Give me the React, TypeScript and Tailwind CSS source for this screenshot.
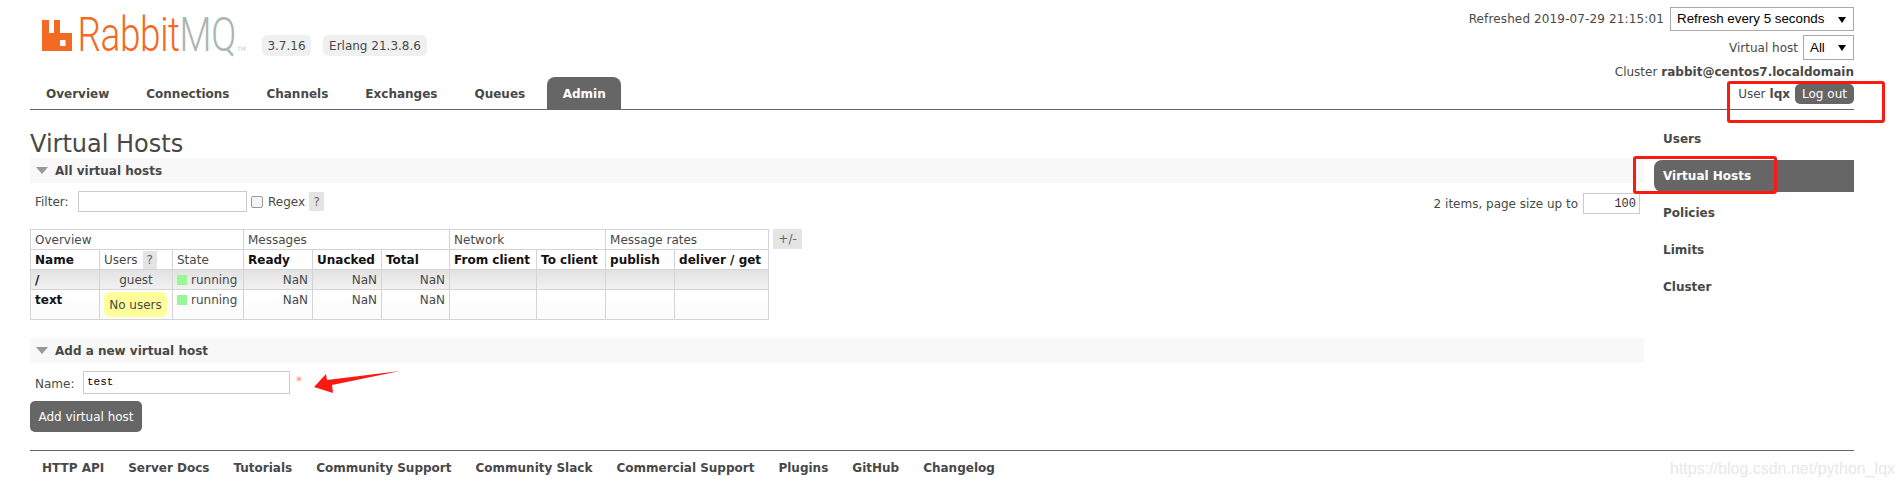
import React from "react";

const tabs = ["Overview", "Connections", "Channels", "Exchanges", "Queues"];
const footerLinks = [
  "HTTP API",
  "Server Docs",
  "Tutorials",
  "Community Support",
  "Community Slack",
  "Commercial Support",
  "Plugins",
  "GitHub",
  "Changelog",
];
const sideLinks = ["Users", "Virtual Hosts", "Policies", "Limits", "Cluster"];

const colWidths = [69, 73, 71, 69, 69, 68, 87, 69, 69, 94];

function Help({ label = "?", className = "" }: { label?: string; className?: string }) {
  return (
    <span className={`inline-flex items-center justify-center bg-[#e4e4e4] text-[#666] ${className}`}>
      {label}
    </span>
  );
}

function SectionHeader({ title }: { title: string }) {
  return (
    <div className="flex h-[25px] items-center bg-[#f8f8f8] pl-[6px] font-bold">
      <span className="mr-[7px] h-0 w-0 border-x-[6px] border-t-[7px] border-x-transparent border-t-[#999]" />
      {title}
    </div>
  );
}

function FakeSelect({ label, className }: { label: string; className: string }) {
  return (
    <div
      className={`relative flex items-center border border-[#a9a9a9] bg-white pl-[6px] font-['Liberation_Sans',Arial,sans-serif] text-[13.33px] text-black ${className}`}
    >
      {label}
      <span className="absolute right-[7px] top-[9px] h-0 w-0 border-x-[4px] border-t-[6px] border-x-transparent border-t-black" />
    </div>
  );
}

function Logo() {
  return (
    <div className="relative flex h-[34px] w-[203px] items-start">
      <svg width="30" height="34" viewBox="0 0 30 34" className="shrink-0">
        <path
          fill="#f26a24"
          fillRule="evenodd"
          d="M0 2h7v13h5V2h6v13h12v18H0z M18 22h5.5v6H18z"
        />
      </svg>
      <div className="w-0 origin-top-left scale-x-[.77] whitespace-nowrap pl-[7px] font-['Roboto',sans-serif] text-[48px] leading-[34px] font-light tracking-[-0.5px]">
        <span className="text-[#f26a24]">Rabbit</span>
        <span className="text-[#a9b6b1]">MQ</span>
      </div>
      <span className="absolute top-[28px] left-[195px] text-[6px] leading-none text-[#c4ccc9]">TM</span>
    </div>
  );
}

function VhostRow({
  name,
  users,
  tall,
}: {
  name: string;
  users: React.ReactNode;
  tall?: boolean;
}) {
  const bg = tall
    ? "bg-gradient-to-b from-[#ffffff] to-[#fbfbfb]"
    : "bg-gradient-to-b from-[#e2e2e2] to-[#f2f2f2]";
  const cell = `border border-[#d4d4d4] px-[4px] align-top ${tall ? "pt-[1px] leading-[18px]" : "pt-[2px] leading-[17px]"}`;
  return (
    <tr className={`${bg} ${tall ? "h-[30px]" : "h-[20px]"}`}>
      <td className={`${cell} font-bold text-[#111]`}>{name}</td>
      <td className={`${cell} ${tall ? "!pt-[2px]" : ""} text-center`}>{users}</td>
      <td className={`${cell} whitespace-nowrap`}>
        <span className="mr-[4px] inline-block size-[10px] bg-[#98f898] align-[-1px]" />
        running
      </td>
      <td className={`${cell} text-right`}>NaN</td>
      <td className={`${cell} text-right`}>NaN</td>
      <td className={`${cell} text-right`}>NaN</td>
      <td className={cell} />
      <td className={cell} />
      <td className={cell} />
      <td className={cell} />
    </tr>
  );
}

function VhostTable() {
  const group = "border border-[#d4d4d4] px-[4px] text-left font-normal leading-[18px]";
  const th = "border border-[#d4d4d4] px-[4px] text-left font-bold text-[#111] whitespace-nowrap leading-[18px]";
  const plain = "border border-[#d4d4d4] px-[4px] text-left font-normal leading-[18px]";
  return (
    <div className="mt-[17px] flex items-start gap-[4px]">
      <table className="w-[738px] table-fixed border-collapse border border-[#ccc]">
        <colgroup>
          {colWidths.map((w, i) => (
            <col key={i} style={{ width: w }} />
          ))}
        </colgroup>
        <thead>
          <tr className="h-[20px]">
            <th colSpan={3} className={group}>Overview</th>
            <th colSpan={3} className={group}>Messages</th>
            <th colSpan={2} className={group}>Network</th>
            <th colSpan={2} className={group}>Message rates</th>
          </tr>
          <tr className="h-[20px]">
            <th className={th}>Name</th>
            <th className={plain}>
              <div className="flex h-[18px] items-center whitespace-nowrap">
                Users
                <Help className="ml-[5px] h-[18px] w-[14px]" />
              </div>
            </th>
            <th className={plain}>State</th>
            <th className={th}>Ready</th>
            <th className={th}>Unacked</th>
            <th className={th}>Total</th>
            <th className={th}>From client</th>
            <th className={th}>To client</th>
            <th className={th}>publish</th>
            <th className={th}>deliver / get</th>
          </tr>
        </thead>
        <tbody>
          <VhostRow name="/" users="guest" />
          <VhostRow
            tall
            name="text"
            users={
              <span className="flex h-[25px] w-[63px] items-center justify-center rounded-[6px] bg-[#ffff99] whitespace-nowrap">
                No users
              </span>
            }
          />
        </tbody>
      </table>
      <Help label="+/-" className="h-[20px] w-[29px]" />
    </div>
  );
}

export default function App() {
  return (
    <div className="relative h-[485px] w-[1902px] overflow-hidden bg-white pr-[48px] pl-[30px] font-['DejaVu_Sans',Verdana,sans-serif] text-[12px] text-[#484848]">
      {/* Header */}
      <header className="flex h-[110px] justify-between border-b border-[#666]">
        <div className="flex flex-col justify-between">
          <div className="mt-[18px] ml-[12px] flex items-start">
            <Logo />
            <span className="mt-[17px] ml-[17px] flex h-[21px] w-[49px] items-center justify-center rounded-[5px] bg-[#f0f0f0]">
              3.7.16
            </span>
            <span className="mt-[17px] ml-[12px] flex h-[21px] w-[104px] items-center justify-center rounded-[5px] bg-[#f0f0f0]">
              Erlang 21.3.8.6
            </span>
          </div>
          <nav className="flex items-end pl-[4px]">
            {tabs.map((t) => (
              <span key={t} className="mr-[13px] flex h-[32px] items-center px-[12px] pt-[2px] font-bold whitespace-nowrap">
                {t}
              </span>
            ))}
            <span className="-ml-[3px] flex h-[32px] w-[74px] items-center justify-center rounded-t-[8px] bg-[#666] pt-[2px] font-bold text-white">
              Admin
            </span>
          </nav>
        </div>
        <div className="flex flex-col items-end pt-[7px]">
          <div className="flex h-[24px] items-center gap-[6px]">
            <span className="tracking-[0.13px]">Refreshed 2019-07-29 21:15:01</span>
            <FakeSelect label="Refresh every 5 seconds" className="h-[24px] w-[184px]" />
          </div>
          <div className="mt-[4px] flex h-[25px] items-center gap-[5px]">
            Virtual host
            <FakeSelect label="All" className="h-[25px] w-[51px]" />
          </div>
          <div className="mt-[2px] flex h-[20px] items-center gap-[4px]">
            Cluster <b>rabbit@centos7.localdomain</b>
          </div>
          <div className="mt-[2px] flex h-[20px] items-center">
            User <b className="ml-[4px]">lqx</b>
            <span className="ml-[5px] flex h-[20px] w-[59px] items-center justify-center rounded-[5px] bg-[#666] text-white">
              Log out
            </span>
          </div>
        </div>
      </header>

      {/* Main */}
      <div className="flex">
        <main className="w-[1614px]">
          <h1 className="flex h-[48px] items-end text-[24px] leading-[28px] font-normal">Virtual Hosts</h1>
          <SectionHeader title="All virtual hosts" />
          <div className="mt-[8px] flex h-[21px] items-center justify-between pr-[4px] pl-[5px]">
            <div className="flex items-center">
              <span className="w-[43px]">Filter:</span>
              <span className="h-[21px] w-[169px] border border-[#ccc]" />
              <span className="mr-[5px] ml-[4px] size-[12px] rounded-[2px] border border-[#999] bg-[#f4f4f4]" />
              Regex
              <Help className="ml-[4px] h-[19px] w-[15px]" />
            </div>
            <div className="mt-[4px] flex items-center gap-[5px]">
              2 items, page size up to
              <span className="flex h-[21px] w-[57px] items-center justify-end border border-[#ccc] pr-[3px] font-['Liberation_Mono',monospace] text-[#333]">
                100
              </span>
            </div>
          </div>
          <VhostTable />
          <div className="mt-[18px]">
            <SectionHeader title="Add a new virtual host" />
          </div>
          <div className="mt-[8px] flex h-[23px] items-center pl-[5px]">
            <span className="w-[48px] pt-[2px]">Name:</span>
            <span className="flex h-[23px] w-[207px] items-center border border-[#ccc] pl-[3px] font-['Liberation_Mono',monospace] text-[11px] text-black">
              test
            </span>
            <span className="mb-[4px] ml-[6px] text-[#f88]">*</span>
          </div>
          <button className="mt-[7px] block h-[31px] w-[112px] rounded-[5px] bg-[#666] text-white">
            Add virtual host
          </button>
        </main>
        <aside className="ml-[10px] flex w-[200px] flex-col pt-[13px]">
          {sideLinks.map((l) =>
            l === "Virtual Hosts" ? (
              <span key={l} className="mb-[5px] flex h-[32px] items-center rounded-l-[8px] bg-[#666] pl-[9px] font-bold text-white">
                {l}
              </span>
            ) : (
              <span key={l} className="mb-[5px] flex h-[32px] items-center pl-[9px] font-bold">
                {l}
              </span>
            ),
          )}
        </aside>
      </div>

      {/* Footer */}
      <footer className="absolute top-[450px] right-[48px] left-[30px] flex h-[35px] items-center border-t border-[#666] pl-[12px] font-bold">
        {footerLinks.map((l) => (
          <span key={l} className="mr-[24px] whitespace-nowrap">{l}</span>
        ))}
      </footer>

      {/* Screenshot annotations */}
      <div className="absolute top-[81px] left-[1727px] h-[42px] w-[158px] rounded-[3px] border-[3px] border-[#fb1a10]" />
      <div className="absolute top-[156px] left-[1633px] h-[38px] w-[144px] rounded-[3px] border-[3px] border-[#fb1a10]" />
      <svg className="absolute top-[370px] left-[312px]" width="90" height="24" viewBox="0 0 90 24">
        <path fill="#fb1a10" d="M2 17 L14 4 L15 10 L88 1 L20 15 L21 23 Z" />
      </svg>
      <span className="absolute top-[457px] left-[1670px] font-['Liberation_Sans',Arial,sans-serif] text-[16px] text-[#e8e8e8]">
        https://blog.csdn.net/python_lqx
      </span>
    </div>
  );
}
